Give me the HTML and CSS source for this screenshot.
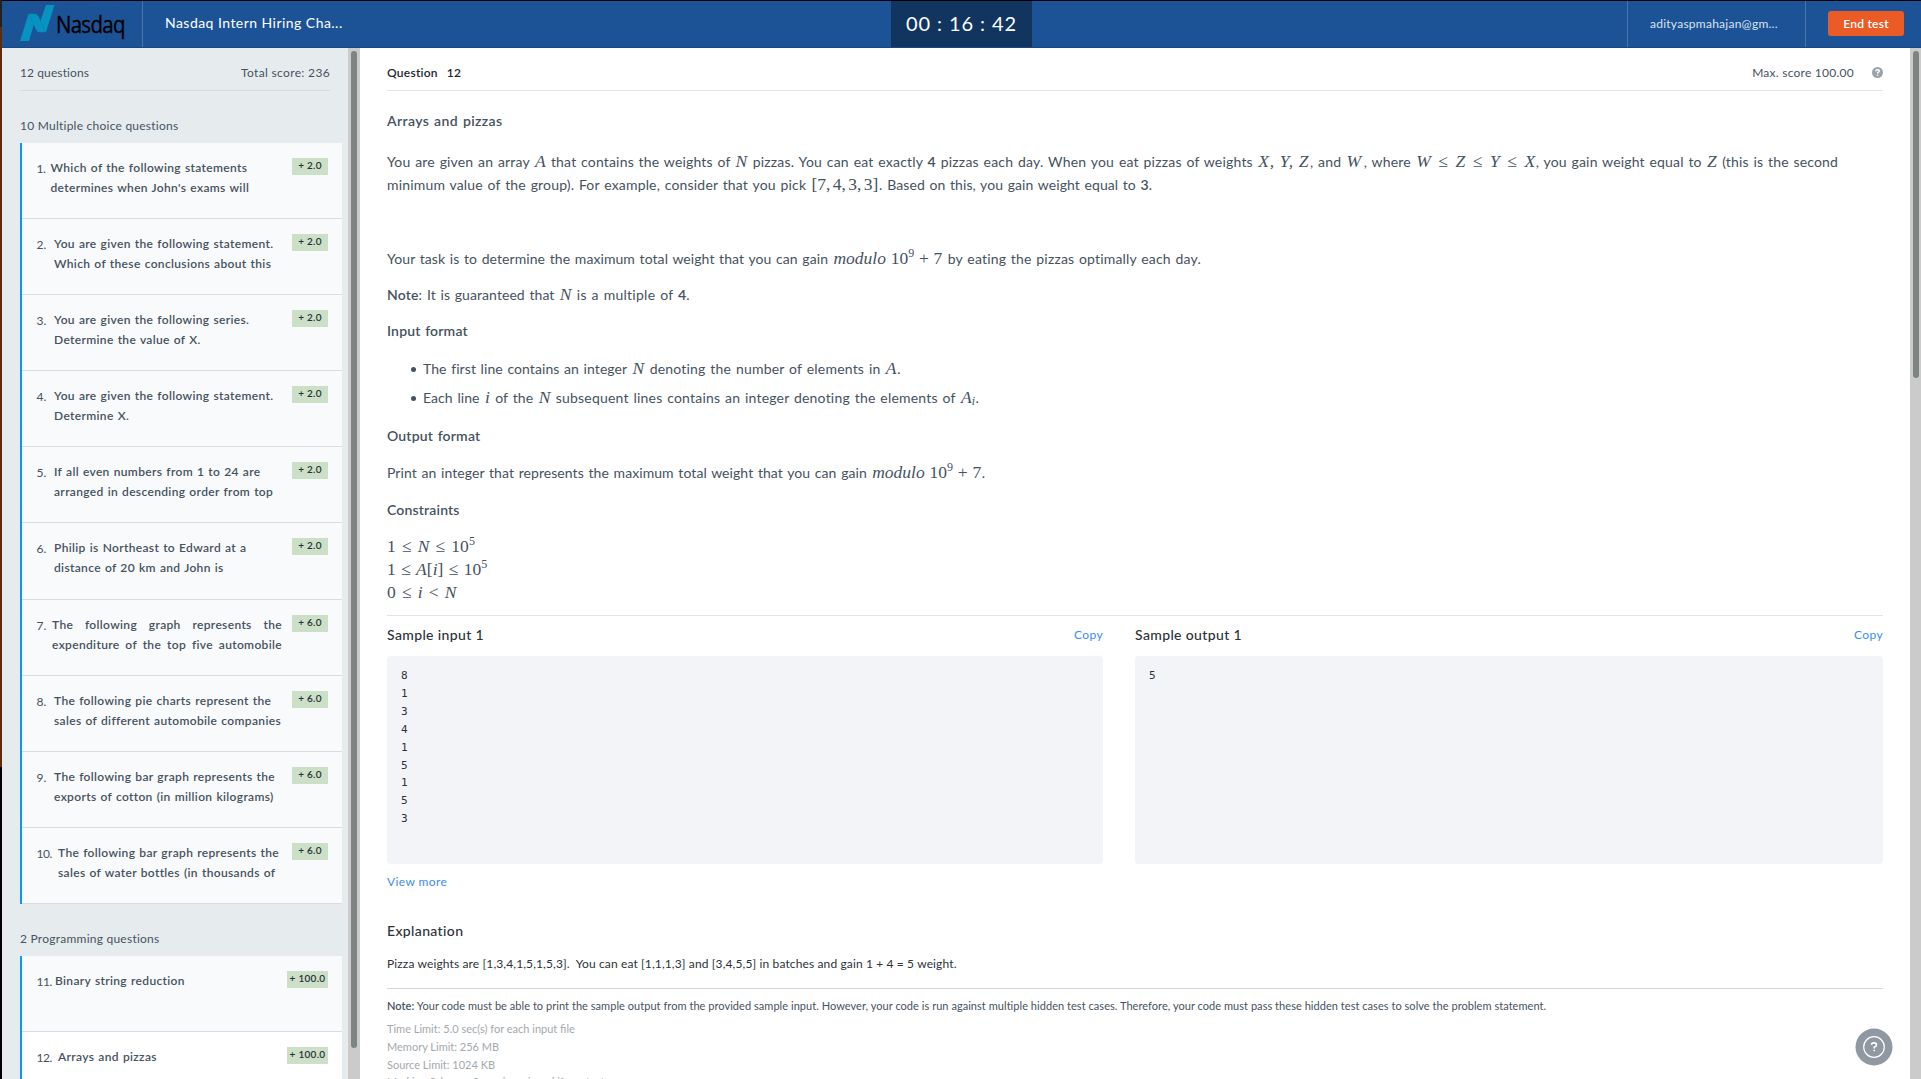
FILE: index.html
```html
<!DOCTYPE html>
<html lang="en">
<head>
<meta charset="utf-8">
<title>Nasdaq Intern Hiring Challenge</title>
<link rel="stylesheet" href="styles.css">
</head>
<body>
<div class="edge"><div class="edge-top"></div><div class="edge-mid"></div></div>
<div class="app">
<header class="topbar">
  <div class="brand">
    <svg class="mark" width="36" height="37" viewBox="0 0 36 37">
      <path d="M0 36 L8.500 9 H17 L9 36 Z M17 26 L26 0 H34.500 L26 27 H17 Z" fill="#0693c1"/>
      <path d="M9 9 H15 Q18.500 10 20 15 L25 27 H19 Q16 26 14.500 21 Z" fill="#0693c1" stroke="#0a84b4" stroke-width=".7"/>
    </svg>
    <span class="wordmark">Nasdaq</span>
  </div>
  <div class="test-name">Nasdaq Intern Hiring Cha...</div>
  <div class="timer">00 : 16 : 42</div>
  <div class="account">adityaspmahajan@gm...</div>
  <div class="finish"><button class="end">End test</button></div>
</header>
<div class="body">
<aside class="sidebar">
  <div class="summary"><span class="count">12 questions</span><span>Total score: 236</span></div>
  <h2 class="group">10 Multiple choice questions</h2>
  <ol class="list">
    <li class="item"><span class="num n1">1.</span><p class="label">Which of the following statements<br>determines when John's exams will</p><span class="badge">+ 2.0</span></li>
    <li class="item"><span class="num">2.</span><p class="label">You are given the following statement.<br>Which of these conclusions about this</p><span class="badge">+ 2.0</span></li>
    <li class="item"><span class="num">3.</span><p class="label">You are given the following series.<br>Determine the value of X.</p><span class="badge">+ 2.0</span></li>
    <li class="item"><span class="num">4.</span><p class="label">You are given the following statement.<br>Determine X.</p><span class="badge">+ 2.0</span></li>
    <li class="item"><span class="num">5.</span><p class="label">If all even numbers from 1 to 24 are<br>arranged in descending order from top</p><span class="badge">+ 2.0</span></li>
    <li class="item"><span class="num">6.</span><p class="label">Philip is Northeast to Edward at a<br>distance of 20 km and John is</p><span class="badge">+ 2.0</span></li>
    <li class="item"><span class="num n7">7.</span><p class="label justified">The following graph represents the expenditure of the top five automobile</p><span class="badge">+ 6.0</span></li>
    <li class="item"><span class="num">8.</span><p class="label">The following pie charts represent the<br>sales of different automobile companies</p><span class="badge">+ 6.0</span></li>
    <li class="item"><span class="num">9.</span><p class="label">The following bar graph represents the<br>exports of cotton (in million kilograms)</p><span class="badge">+ 6.0</span></li>
    <li class="item"><span class="num n10">10.</span><p class="label">The following bar graph represents the<br>sales of water bottles (in thousands of</p><span class="badge">+ 6.0</span></li>
  </ol>
  <h2 class="group">2 Programming questions</h2>
  <ol class="list">
    <li class="item"><span class="num n11">11.</span><p class="label">Binary string reduction</p><span class="badge wide">+ 100.0</span></li>
    <li class="item current"><span class="num n10">12.</span><p class="label">Arrays and pizzas</p><span class="badge wide">+ 100.0</span></li>
  </ol>
</aside>
<div class="splitter"><div class="thumb"></div></div>
<main class="main">
  <div class="qhead"><b>Question</b><b class="qno">12</b><span class="max">Max. score 100.00</span>
    <svg width="11" height="11" viewBox="0 0 11 11"><circle cx="5.500" cy="5.500" r="5.500" fill="#9aa2aa"/><path d="M3.700 4.200 Q3.800 2.700 5.500 2.700 Q7.300 2.700 7.300 4.100 Q7.300 5 5.600 5.700 V6.400 M5.600 7.400 V8.700" fill="none" stroke="#fff" stroke-width="1.400"/></svg>
  </div>
  <section class="problem">
    <h3 class="title">Arrays and pizzas</h3>
    <p class="intro">You are given an array <i class="m">A</i> that contains the weights of <i class="m">N</i> <span class="mid">pizzas. You can eat exactly <b>4</b> pizzas each day. When you eat pizzas of weights</span> <i class="m seq">X, Y, Z</i>, and <i class="m big">W</i>, where <i class="m chain">W ≤ Z ≤ Y ≤ X</i>, you gain weight equal to <i class="m">Z</i> (this is the second<br>minimum value of the group). For example, consider that you pick <span class="m list-val">[7, 4, 3, 3]</span>. <span class="tight">Based on this, you gain weight equal to <b>3</b>.</span></p>
    <p class="task"><span class="tight">Your task is to determine the maximum total weight that you can gain</span> <span class="m"><i>modulo</i> 10<sup>9</sup> + 7</span> by eating the pizzas optimally each day.</p>
    <p class="note"><b>Note</b>: <span class="tight">It is guaranteed that</span> <i class="m">N</i> <span class="loose">is a multiple of <b>4</b>.</span></p>
    <h3 class="h-in">Input format</h3>
    <ul class="points">
      <li><span class="tight">The first line contains an integer</span> <i class="m">N</i> <span class="mid">denoting the number of elements in</span> <i class="m">A</i>.</li>
      <li><span class="tight">Each line</span> <i class="m">i</i> of the <i class="m">N</i> <span class="mid">subsequent lines contains an integer denoting the elements of</span> <i class="m">A<sub>i</sub></i>.</li>
    </ul>
    <h3 class="h-out">Output format</h3>
    <p class="print"><span class="tight">Print an integer that represents the maximum total weight that you can gain</span> <span class="m"><i>modulo</i> 10<sup>9</sup> + 7</span>.</p>
    <h3 class="h-con">Constraints</h3>
    <p class="limits"><span class="m rel">1 ≤ <i>N</i> ≤ 10<sup>5</sup></span><br><span class="m rel close">1 ≤ <i>A</i>[<i>i</i>] ≤ 10<sup>5</sup></span><br><span class="m rel">0 ≤ <i>i</i> &lt; <i>N</i></span></p>
  </section>
  <section class="samples">
    <div class="sample"><div class="shead"><h4>Sample input 1</h4><a>Copy</a></div><pre>8
1
3
4
1
5
1
5
3</pre><a class="more">View more</a></div>
    <div class="sample"><div class="shead"><h4>Sample output 1</h4><a>Copy</a></div><pre>5</pre></div>
  </section>
  <h4 class="exp">Explanation</h4>
  <p class="exp-text">Pizza weights are [1,3,4,1,5,1,5,3].&nbsp; You can eat [1,1,1,3] and [3,4,5,5] in batches and gain 1 + 4 = 5 weight.</p>
  <p class="run-note"><b>Note:</b> Your code must be able to print the sample output from the provided sample input. However, your code is run against multiple hidden test cases. Therefore, your code must pass these hidden test cases to solve the problem statement.</p>
  <ul class="meta"><li>Time Limit: 5.0 sec(s) for each input file</li><li>Memory Limit: 256 MB</li><li>Source Limit: 1024 KB</li><li>Marking Scheme: Score is assigned if any testcase passes</li></ul>
</main>
<div class="scroll"><div class="thumb"></div></div>
</div>
</div>
<div class="help"><svg width="38" height="38" viewBox="0 0 38 38"><circle cx="19" cy="19" r="18.500" fill="#9098a1"/><circle cx="19" cy="19" r="10.300" fill="none" stroke="#fff" stroke-width="1.200"/><path d="M16.500 16.800 Q16.500 14.900 19 14.900 Q21.500 14.900 21.500 16.900 Q21.500 18.200 19.200 19.200 V20.500 M19.200 21.700 V23.300" fill="none" stroke="#fff" stroke-width="1.600"/></svg></div>
</body>
</html>
```
FILE: styles.css
```css
* { box-sizing: border-box; margin: 0; padding: 0; }
body { width: 1921px; height: 1079px; overflow: hidden; display: flex; background: #000; font-family: Lato, sans-serif; color: #46525e; }
ol, ul { list-style: none; }
b { font-weight: 600; }
.edge { width: 2px; flex: none; background: #000; }
.edge-top { height: 27px; background: #222; }
.edge-mid { height: 740px; background: #5c2c0c; }
.app { flex: 1; margin-top: 1px; display: flex; flex-direction: column; min-width: 0; }

/* Top bar */
.topbar { height: 47px; flex: none; display: flex; align-items: stretch; background: #1c5296; border-bottom: 1px solid #194783; color: #fff; }
.topbar > div { display: flex; align-items: center; padding-bottom: 1px; }
.brand { width: 141px; padding-left: 18px; border-right: 1px solid #4875ac; }
.mark { flex: none; }
.wordmark { color: #000; font: 23px/30px "Open Sans", sans-serif; letter-spacing: -.8px; -webkit-text-stroke: .3px #000; transform: scaleX(.89); transform-origin: 0 50%; }
.topbar .test-name { width: 748px; padding: 0 0 3px 22px; font-size: 14px; letter-spacing: .46px; }
.timer { width: 141px; justify-content: center; background: #12355f; font-size: 20px; letter-spacing: .9px; }
.topbar .timer { padding-bottom: 3px; }
.account { margin-left: auto; width: 179px; padding-left: 22px; border-left: 1px solid #4875ac; border-right: 1px solid #4875ac; font-size: 12px; letter-spacing: .25px; color: #d9e4f1; }
.finish { width: 115px; padding-left: 22px; }
.end { width: 76px; height: 25px; border: 0; border-radius: 3px; background: #ea5b25; color: #fff; font: 600 12px Lato, sans-serif; letter-spacing: .25px; }

/* Question list */
.body { flex: 1; display: flex; min-height: 0; }
.sidebar { width: 346px; padding: 0 6px 0 18px; overflow: hidden; background: #e6ecee; font-size: 12px; letter-spacing: .28px; }
.summary { height: 43px; padding-top: 7px; margin-right: 12px; display: flex; justify-content: space-between; align-items: center; border-bottom: 1px solid #d5dbde; letter-spacing: .34px; }
.count { letter-spacing: .1px; }
.group { height: 52px; padding-top: 25px; font-size: 12px; line-height: 20px; font-weight: 400; letter-spacing: .24px; }
.list { border-left: 2px solid #0a98f7; }
.item { height: 76.1px; padding: 15px 14px 0 14.5px; display: flex; background: #f8fafc; border-bottom: 1px solid #d8dcdf; }
.current { background: #fff; }
.num { width: 17.5px; flex: none; padding-top: 1px; line-height: 20px; letter-spacing: 0; white-space: nowrap; }
.n1, .n10, .n11 { letter-spacing: -.5px; }
.n1 { width: 14px; }
.n7 { width: 15.5px; }
.n10 { width: 21.5px; }
.n11 { width: 18.5px; }
.label { flex: 1; min-width: 0; line-height: 20px; font-weight: 600; white-space: nowrap; letter-spacing: .34px; word-spacing: .7px; }
.justified { margin-right: 10px; white-space: normal; text-align: justify; text-align-last: justify; word-spacing: 0; }
.badge { width: 36px; height: 17px; flex: none; background: #cbe0c6; color: #293238; font: 600 10px/15px Lato, sans-serif; text-align: center; }
.wide { width: 41px; }

.splitter { width: 12px; padding: 3px 3px 0; background: #cbcbcb; }
.splitter .thumb { height: 997px; border-radius: 3px; background: #7e8484; }
.scroll { width: 11px; padding: 3px 2px 0 3px; background: #cbcbcb; }
.scroll .thumb { height: 327px; border-radius: 3px; background: #7e8484; }

/* Problem statement */
.main { flex: 1; padding: 0 27px; background: #fff; overflow: hidden; font-size: 14px; }
.qhead { height: 43px; padding: 7px 0 0; display: flex; align-items: center; border-bottom: 1px solid #e3e5e7; font-size: 12px; color: #1f262d; letter-spacing: .25px; }
.qno { margin-left: 9px; }
.max { margin-left: auto; margin-right: 18px; color: #46525e; }
.problem { height: 525px; border-bottom: 1px solid #dfe2e6; line-height: 23px; letter-spacing: .17px; word-spacing: 1px; }
.tight { letter-spacing: .07px; }
.mid { letter-spacing: .2px; }
.loose { letter-spacing: .26px; }
h3 { font-size: 14px; font-weight: 600; }
.title { padding-top: 18px; letter-spacing: .38px; }
.intro { padding-top: 18px; white-space: nowrap; }
.task { padding-top: 51px; }
.note { padding-top: 13px; }
.h-in { padding-top: 13px; }
.points { padding-top: 15px; padding-left: 36px; }
.points li { margin-bottom: 6px; }
.points li::before { content: ""; display: inline-block; width: 5px; height: 5px; margin: 0 7.5px 0 -12.5px; border-radius: 50%; background: #46525e; vertical-align: 2px; }
.h-out { padding-top: 9px; }
.print { padding-top: 14px; }
.h-con { padding-top: 14px; }
.limits { padding-top: 14px; }

/* Formulas */
.m { margin: 0 .6px; font-family: "Liberation Serif", serif; font-size: 17.5px; line-height: 0; letter-spacing: 0; word-spacing: .4px; }
.seq { letter-spacing: .9px; word-spacing: -.6px; }
.big { letter-spacing: 2px; }
.chain { word-spacing: 3.2px; }
.rel { margin-left: 0; word-spacing: 1.8px; }
.close { word-spacing: 1px; }
.list-val { word-spacing: -2px; }
sup, sub { font-size: 12px; line-height: 0; }
sub { vertical-align: -2px; }

/* Samples */
.samples { display: grid; grid-template-columns: 716px 1fr; column-gap: 32px; height: 304px; color: #2b3238; }
.shead { height: 40px; padding-bottom: 3px; display: flex; align-items: center; justify-content: space-between; }
h4 { font-size: 14px; font-weight: 500; letter-spacing: .36px; }
a { color: #3b8cf0; font-size: 12px; letter-spacing: .4px; }
.sample pre { height: 208px; padding: 11px 14px; border-radius: 4px; background: #f2f4f8; font: 11px/17.9px "DejaVu Sans Mono", monospace; }
.more { display: block; padding-top: 9px; line-height: 18px; }
.exp { line-height: 22px; color: #2b3238; }
.exp-text { margin-top: 12px; height: 35px; line-height: 20px; font-size: 12px; letter-spacing: .13px; color: #2b3238; border-bottom: 1px solid #cfd8e3; }
.run-note { padding-top: 7px; font-size: 11px; line-height: 20px; letter-spacing: .045px; white-space: nowrap; }
.meta { padding-top: 4px; font-size: 11px; line-height: 17.8px; color: #a3a9ae; white-space: nowrap; }
.help { position: absolute; left: 1855px; top: 1028px; }
```
